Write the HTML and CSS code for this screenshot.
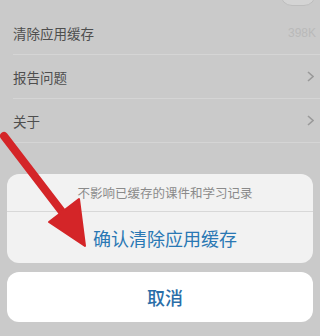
FILE: index.html
```html
<!DOCTYPE html>
<html lang="zh">
<head>
<meta charset="utf-8">
<link rel="stylesheet" href="styles.css">
</head>
<body>
<div class="screen">
  <div class="toggle-strip"><div class="toggle"></div></div>
  <div class="list">
    <div class="row"><span class="label">清除应用缓存</span><span class="value">398K</span></div>
    <div class="row"><span class="label">报告问题</span><svg class="chev" width="7" height="11" viewBox="0 0 7 11"><polyline points="1,1 6,5.5 1,10" fill="none" stroke="#9a9a9a" stroke-width="1.6"/></svg></div>
    <div class="row"><span class="label">关于</span><svg class="chev" width="7" height="11" viewBox="0 0 7 11"><polyline points="1,1 6,5.5 1,10" fill="none" stroke="#9a9a9a" stroke-width="1.6"/></svg></div>
  </div>
  <div class="sheet">
    <div class="card">
      <div class="msg">不影响已缓存的课件和学习记录</div>
      <div class="action">确认清除应用缓存</div>
    </div>
    <div class="card cancel">取消</div>
  </div>
  <svg class="arrow" width="320" height="336" viewBox="0 0 320 336">
    <line x1="4" y1="136" x2="66" y2="217" stroke="#d42528" stroke-width="8" stroke-linecap="round"/>
    <polygon points="49,222 79,199 85,246" fill="#d42528" stroke="#d42528" stroke-width="2" stroke-linejoin="round"/>
  </svg>
</div>
</body>
</html>
```
FILE: styles.css
```css
* { box-sizing: border-box; }
html, body { margin: 0; padding: 0; }
body {
  width: 320px;
  height: 336px;
  overflow: hidden;
  background: #cacaca;
  font-family: "Noto Sans CJK SC", "Noto Sans", sans-serif;
}
.screen {
  position: relative;
  width: 320px;
  height: 336px;
  display: flex;
  flex-direction: column;
}
.toggle-strip {
  height: 11px;
  overflow: hidden;
  display: flex;
  justify-content: flex-end;
  align-items: flex-end;
  padding-right: 4px;
}
.toggle {
  width: 36px;
  height: 24px;
  margin-bottom: 5px;
  border-radius: 12px;
  border: 1.5px solid #bdbdbd;
  background: #d4d4d4;
}
.list {
  padding-left: 13px;
}
.row {
  height: 44px;
  border-bottom: 1px solid #d5d5d5;
  display: flex;
  align-items: center;
  justify-content: space-between;
  padding-right: 6px;
}
.label {
  font-size: 13.5px;
  color: #4e4e4e;
}
.value {
  font-family: "Liberation Sans", sans-serif;
  font-size: 12px;
  color: #b9b9b9;
  margin-right: -2px;
}
.sheet {
  margin-top: 31px;
  padding: 0 7px;
  display: flex;
  flex-direction: column;
  gap: 9px;
}
.card {
  background: #f2f2f2;
  border-radius: 12px;
  overflow: hidden;
}
.msg {
  height: 38px;
  display: flex;
  align-items: center;
  justify-content: center;
  padding-left: 10px;
  font-size: 12.5px;
  color: #8a8a8a;
  border-bottom: 1px solid #d8d8d8;
}
.action {
  height: 51px;
  display: flex;
  align-items: center;
  justify-content: center;
  padding-left: 10px;
  font-size: 18px;
  color: #2a78b4;
}
.cancel {
  background: #ffffff;
  height: 50px;
  display: flex;
  align-items: center;
  justify-content: center;
  padding-left: 10px;
  font-size: 18px;
  font-weight: 500;
  color: #2a6ea8;
}
.arrow {
  position: absolute;
  left: 0;
  top: 0;
  pointer-events: none;
}
```
